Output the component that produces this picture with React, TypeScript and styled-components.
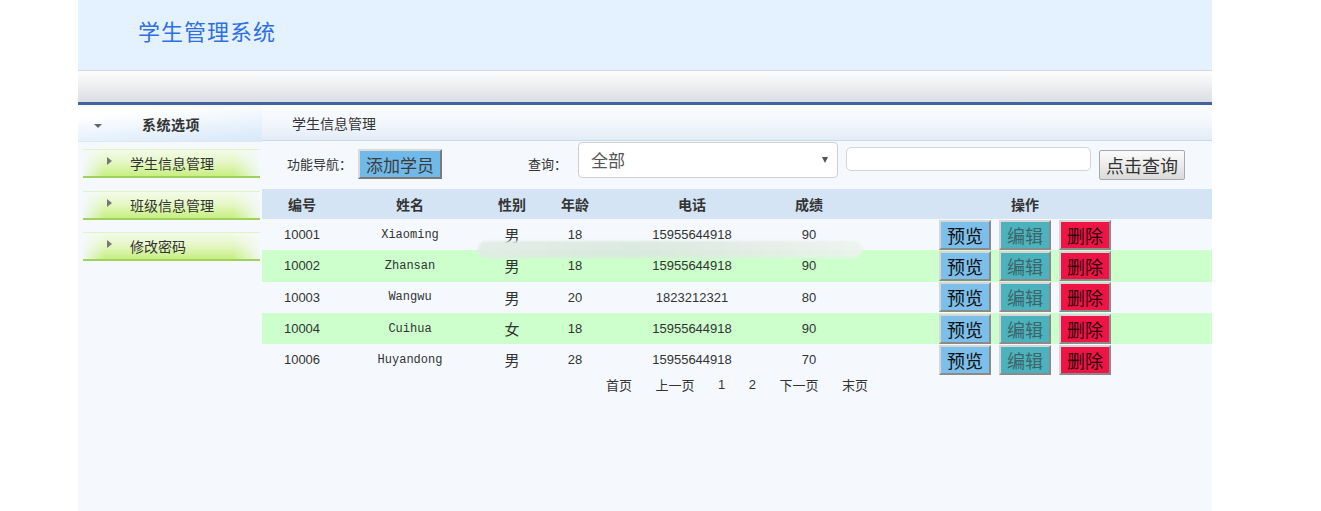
import React from "react";
import styled, { createGlobalStyle } from "styled-components";

const GlobalStyle = createGlobalStyle`
  html, body { margin: 0; padding: 0; background: #ffffff; }
  body { font-family: "Noto Sans CJK SC", "Noto Sans", sans-serif; color: #333; }
  * { box-sizing: border-box; }
`;

const Page = styled.div`
  margin-left: 78px;
  width: 1134px;
  min-height: 511px;
  background: #f5f9fe;
  display: flex;
  flex-direction: column;
`;

const Header = styled.header`
  height: 71px;
  background: #e3f2fe;
  border-bottom: 1px solid #d3d7e2;
  display: flex;
  align-items: center;
  padding-left: 60px;
`;

const Title = styled.h1`
  margin: 0 0 11px 0;
  font-family: "Noto Sans CJK SC", serif;
  font-size: 22px;
  font-weight: 400;
  letter-spacing: 1px;
  color: #2f6fe4;
`;

const NavBar = styled.div`
  height: 34px;
  background: linear-gradient(#fdfdfd, #f0f1f3 40%, #dadde2);
  border-bottom: 3px solid #4262a0;
`;

const Body = styled.div`
  display: flex;
  flex: 1;
`;

const Sidebar = styled.aside`
  width: 184px;
  flex: none;
  display: flex;
  flex-direction: column;
  padding-top: 2px;
`;

const SideHead = styled.div`
  height: 35px;
  display: flex;
  align-items: center;
  background: linear-gradient(175deg, #ffffff 20%, #eaf3fc 60%, #d6e8f9);
  border-bottom: 1px solid #dde8f2;
  padding-left: 16px;
`;

const DownTri = styled.span`
  width: 0;
  height: 0;
  border-left: 4px solid transparent;
  border-right: 4px solid transparent;
  border-top: 4px solid #666;
  margin-right: 40px;
  margin-top: 3px;
`;

const SideTitle = styled.span`
  font-size: 14px;
  font-weight: 700;
  color: #333;
  letter-spacing: 0.5px;
`;

const Menu = styled.ul`
  list-style: none;
  margin: 7px 0 0 0;
  padding: 0 0 0 5px;
  display: flex;
  flex-direction: column;
  gap: 12.5px;
`;

const MenuItem = styled.li`
  width: 177px;
  height: 29px;
  display: flex;
  align-items: center;
  padding-left: 24px;
  border-top: 1px solid #dff2c8;
  border-bottom: 2px solid #9fd25c;
  background:
    linear-gradient(90deg, rgba(245,249,254,0.9), rgba(245,249,254,0) 12%, rgba(245,249,254,0) 85%, rgba(245,249,254,0.9)),
    linear-gradient(#f4fbe9, #e6f7c8 45%, #c8ef82);
  font-size: 14px;
  color: #333;
`;

const RightTri = styled.span`
  width: 0;
  height: 0;
  border-top: 4px solid transparent;
  border-bottom: 4px solid transparent;
  border-left: 5px solid #777;
  margin-right: 18px;
  margin-bottom: 4px;
`;

const Main = styled.main`
  flex: 1;
  display: flex;
  flex-direction: column;
`;

const MainHead = styled.div`
  height: 36px;
  display: flex;
  align-items: center;
  padding-left: 30px;
  font-size: 14px;
  color: #333;
  background: linear-gradient(#fbfdff, #f3f7fc 50%, #e3ecf7);
  border-bottom: 1px solid #c6dce4;
`;

const Toolbar = styled.div`
  height: 48px;
  display: flex;
  align-items: center;
  padding-left: 25px;
  font-size: 13px;
  color: #333;
`;

const Label = styled.span<{ $ml?: number }>`
  margin-left: ${(p) => p.$ml ?? 0}px;
  margin-right: 3px;
  margin-bottom: 3px;
  font-size: 13px;
`;

const AddButton = styled.button`
  width: 84px;
  height: 30px;
  padding: 0;
  margin-left: 3px;
  margin-bottom: 2px;
  background: #70b9e9;
  border-style: solid;
  border-width: 2px;
  border-color: #dadada #7a7a7a #7a7a7a #dadada;
  font-family: "Noto Sans CJK SC", sans-serif;
  font-size: 17px;
  color: #3c3c3c;
`;

const Select = styled.div`
  width: 260px;
  height: 36px;
  margin-bottom: 11px;
  margin-left: 8px;
  background: #ffffff;
  border: 1px solid #cfcfcf;
  border-radius: 4px;
  display: flex;
  align-items: center;
  justify-content: space-between;
  padding: 0 9px 0 12px;
  font-size: 17px;
  color: #555;
`;

const Caret = styled.span`
  width: 0;
  height: 0;
  border-left: 3.5px solid transparent;
  border-right: 3.5px solid transparent;
  border-top: 6px solid #555;
`;

const SearchInput = styled.input`
  width: 245px;
  height: 24px;
  margin-left: 8px;
  margin-bottom: 12px;
  background: #fff;
  border: 1px solid #d4d4d4;
  border-radius: 5px;
  outline: none;
`;

const QueryButton = styled.button`
  width: 86px;
  height: 30px;
  margin-left: 8px;
  padding: 0;
  background: linear-gradient(#fbfbfb, #e8e8e8 60%, #dadada);
  border: 1px solid #a9a9a9;
  border-radius: 2px;
  font-family: "Noto Sans CJK SC", sans-serif;
  font-size: 18px;
  color: #333;
`;

const TableWrap = styled.div`
  position: relative;
`;

const Table = styled.table`
  width: 950px;
  border-collapse: collapse;
  table-layout: fixed;
`;

const HeadCell = styled.th`
  height: 30px;
  background: #d4e4f4;
  font-size: 14px;
  font-weight: 700;
  color: #333;
  text-align: center;
  padding: 0;
`;

const Row = styled.tr<{ $alt: boolean }>`
  background: ${(p) => (p.$alt ? "#ccffcc" : "transparent")};
`;

const Cell = styled.td<{ $mono?: boolean; $cjk?: boolean }>`
  height: 31.3px;
  padding: 0;
  text-align: center;
  color: #333;
  font-family: ${(p) =>
    p.$mono ? '"Liberation Mono", monospace' : p.$cjk ? '"Noto Sans CJK SC", sans-serif' : '"Liberation Sans", sans-serif'};
  font-size: ${(p) => (p.$cjk ? "15px" : p.$mono ? "12px" : "13px")};
`;

const Actions = styled.div`
  display: flex;
  justify-content: center;
  gap: 8px;
`;

const ActionButton = styled.button<{ $bg: string; $fg: string }>`
  width: 52px;
  height: 30px;
  padding: 0;
  background: ${(p) => p.$bg};
  color: ${(p) => p.$fg};
  border-style: solid;
  border-width: 2px;
  border-color: #d6d6d6 #8a8a8a #8a8a8a #d6d6d6;
  font-family: "Noto Sans CJK SC", sans-serif;
  font-size: 18px;
  line-height: 24px;
`;

const Smudge = styled.div`
  position: absolute;
  left: 216px;
  top: 52px;
  width: 384px;
  height: 17px;
  border-radius: 8px;
  background: linear-gradient(90deg, rgba(226,236,230,0.92), rgba(216,232,220,0.92) 40%, rgba(226,236,228,0.92) 70%, rgba(235,244,238,0.92));
  filter: blur(1px);
`;

const Pager = styled.div`
  display: flex;
  justify-content: center;
  gap: 23.5px;
  font-size: 13px;
  color: #333;
  line-height: 18px;
  margin-top: 1px;
`;

const PagerNum = styled.span`
  font-family: "Liberation Sans", sans-serif;
`;

type Student = { id: string; name: string; sex: string; age: string; phone: string; score: string };

const students: Student[] = [
  { id: "10001", name: "Xiaoming", sex: "男", age: "18", phone: "15955644918", score: "90" },
  { id: "10002", name: "Zhansan", sex: "男", age: "18", phone: "15955644918", score: "90" },
  { id: "10003", name: "Wangwu", sex: "男", age: "20", phone: "1823212321", score: "80" },
  { id: "10004", name: "Cuihua", sex: "女", age: "18", phone: "15955644918", score: "90" },
  { id: "10006", name: "Huyandong", sex: "男", age: "28", phone: "15955644918", score: "70" },
];

const widths = [80, 136, 68, 58, 176, 58, 374];
const heads = ["编号", "姓名", "性别", "年龄", "电话", "成绩", "操作"];

export default function App() {
  return (
    <>
      <GlobalStyle />
      <Page>
        <Header>
          <Title>学生管理系统</Title>
        </Header>
        <NavBar />
        <Body>
          <Sidebar>
            <SideHead>
              <DownTri />
              <SideTitle>系统选项</SideTitle>
            </SideHead>
            <Menu>
              {["学生信息管理", "班级信息管理", "修改密码"].map((t) => (
                <MenuItem key={t}>
                  <RightTri />
                  {t}
                </MenuItem>
              ))}
            </Menu>
          </Sidebar>
          <Main>
            <MainHead>学生信息管理</MainHead>
            <Toolbar>
              <Label>功能导航：</Label>
              <AddButton>添加学员</AddButton>
              <Label $ml={86}>查询：</Label>
              <Select>
                <span>全部</span>
                <Caret />
              </Select>
              <SearchInput />
              <QueryButton>点击查询</QueryButton>
            </Toolbar>
            <TableWrap>
              <Table>
                <colgroup>
                  {widths.map((w, i) => (
                    <col key={i} style={{ width: w }} />
                  ))}
                </colgroup>
                <thead>
                  <tr>
                    {heads.map((h) => (
                      <HeadCell key={h}>{h}</HeadCell>
                    ))}
                  </tr>
                </thead>
                <tbody>
                  {students.map((s, i) => (
                    <Row key={s.id} $alt={i % 2 === 1}>
                      <Cell>{s.id}</Cell>
                      <Cell $mono>{s.name}</Cell>
                      <Cell $cjk>{s.sex}</Cell>
                      <Cell>{s.age}</Cell>
                      <Cell>{s.phone}</Cell>
                      <Cell>{s.score}</Cell>
                      <Cell>
                        <Actions>
                          <ActionButton $bg="#7cbfea" $fg="#111">预览</ActionButton>
                          <ActionButton $bg="#4cb3be" $fg="#3d6468">编辑</ActionButton>
                          <ActionButton $bg="#ef1446" $fg="#2a0008">删除</ActionButton>
                        </Actions>
                      </Cell>
                    </Row>
                  ))}
                </tbody>
              </Table>
              <Smudge />
              <Pager>
                <span>首页</span>
                <span>上一页</span>
                <PagerNum>1</PagerNum>
                <PagerNum>2</PagerNum>
                <span>下一页</span>
                <span>末页</span>
              </Pager>
            </TableWrap>
          </Main>
        </Body>
      </Page>
    </>
  );
}
